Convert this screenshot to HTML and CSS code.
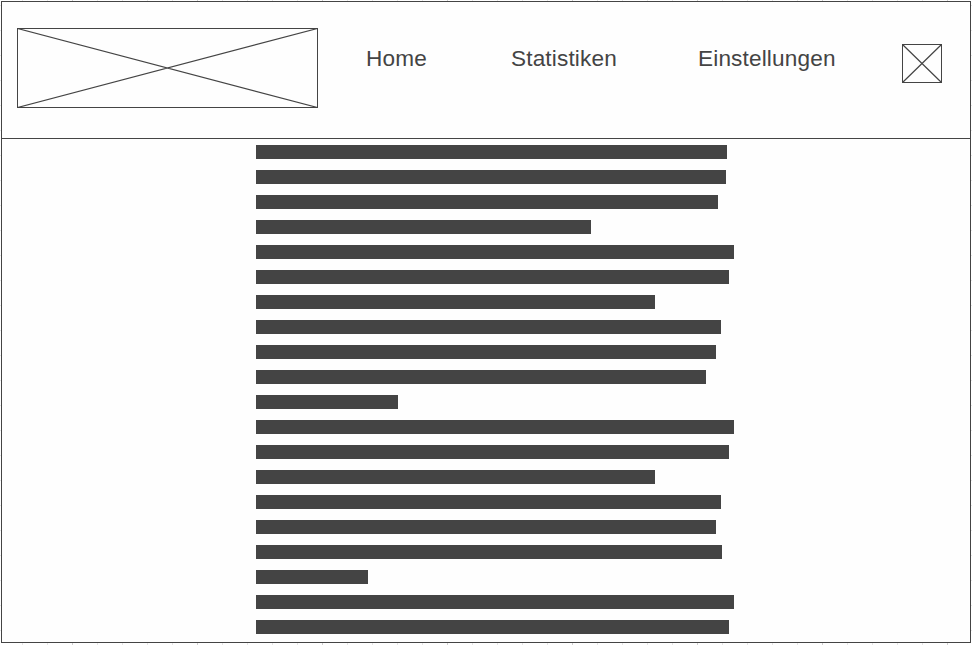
FILE: index.html
```html
<!DOCTYPE html>
<html lang="de">
<head>
<meta charset="utf-8">
<title>Wireframe</title>
<link rel="stylesheet" href="styles.css">
</head>
<body>
<div class="frame">
  <header class="header">
    <svg class="logo" width="301" height="80" viewBox="0 0 301 80">
      <rect x=".5" y=".5" width="300" height="79"/>
      <path d="M.5.5l300 79M.5 79.5l300-79"/>
    </svg>
    <nav class="nav">
      <a class="home">Home</a>
      <a class="stats">Statistiken</a>
      <a class="settings">Einstellungen</a>
    </nav>
    <svg class="avatar" width="40" height="39" viewBox="0 0 40 39">
      <rect x=".5" y=".5" width="39" height="38"/>
      <path d="M.5.5l39 38M.5 38.5l39-38"/>
    </svg>
  </header>
  <main class="lines">
    <div class="line" style="width:471px"></div>
    <div class="line" style="width:470px"></div>
    <div class="line" style="width:462px"></div>
    <div class="line" style="width:335px"></div>
    <div class="line" style="width:478px"></div>
    <div class="line" style="width:473px"></div>
    <div class="line" style="width:399px"></div>
    <div class="line" style="width:465px"></div>
    <div class="line" style="width:460px"></div>
    <div class="line" style="width:450px"></div>
    <div class="line" style="width:142px"></div>
    <div class="line" style="width:478px"></div>
    <div class="line" style="width:473px"></div>
    <div class="line" style="width:399px"></div>
    <div class="line" style="width:465px"></div>
    <div class="line" style="width:460px"></div>
    <div class="line" style="width:466px"></div>
    <div class="line" style="width:112px"></div>
    <div class="line" style="width:478px"></div>
    <div class="line" style="width:473px"></div>
  </main>
</div>
</body>
</html>
```
FILE: styles.css
```css
* { box-sizing: border-box; }
body {
  margin: 0;
  padding: 1px;
  height: 645px;
  overflow: hidden;
  background-color: #fff;
  background-image:
    linear-gradient(to right, #d0d0d0 1px, transparent 1px),
    linear-gradient(to right, #e6e6e6 1px, transparent 1px),
    linear-gradient(to bottom, #e6e6e6 1px, transparent 1px);
  background-size: 125px 125px, 25px 25px, 25px 25px;
  background-position: 72px 0, 22px 0, 0 5px;
  font-family: "Liberation Sans", Arial, sans-serif;
}
.frame {
  width: 970px;
  height: 642px;
  border: 1px solid #444;
  background: #fefefe;
}
.header {
  display: flex;
  align-items: flex-start;
  height: 137px;
  border-bottom: 1px solid #444;
  padding: 26px 28px 0 15px;
}
svg {
  display: block;
  flex: none;
  fill: none;
  stroke: #444;
  stroke-width: 1;
}
svg path { stroke-width: 1.2; }
.nav {
  display: flex;
  margin: 18px 0 0 48px;
  color: #444;
  font-size: 22.6px;
  line-height: 26px;
  letter-spacing: 0.15px;
}
.home { width: 145px; }
.stats { width: 187px; }
.avatar { margin: 16px 0 0 auto; }
.lines {
  display: flex;
  flex-direction: column;
  gap: 11px;
  padding: 6px 0 0 254px;
}
.line {
  height: 14px;
  background: #444;
}
```
